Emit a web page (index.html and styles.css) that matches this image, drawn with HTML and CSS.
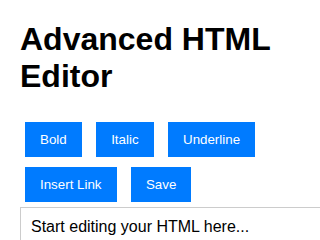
FILE: index.html
```html
<!DOCTYPE html>
<html>
<head>
<meta charset="utf-8">
<link rel="stylesheet" href="styles.css">
</head>
<body>
<h1 class="title">Advanced HTML Editor</h1>
<div class="toolbar">
  <button class="btn">Bold</button>
  <button class="btn">Italic</button>
  <button class="btn">Underline</button>
  <button class="btn">Insert Link</button>
  <button class="btn">Save</button>
</div>
<div class="editor" contenteditable="true">Start editing your HTML here...</div>
</body>
</html>
```
FILE: styles.css
```css
html, body {
  overflow-x: hidden;
}
body {
  margin: 0;
  padding: 0 20px 20px;
  font-family: "Liberation Sans", Arial, sans-serif;
  font-size: 16px;
  color: #000;
  background: #fff;
}
.title {
  font-size: 32px;
  font-weight: bold;
  margin: 21.44px 0;
}
.toolbar {
  width: 300px;
}
.btn {
  display: inline-block;
  margin: 5px;
  padding: 10px 15px;
  border: none;
  border-radius: 0;
  background: #007bff;
  color: #fff;
  font-family: "Liberation Sans", Arial, sans-serif;
  font-size: 13.333px;
}
.editor {
  width: 100%;
  border: 1px solid #ccc;
  padding: 10px;
  min-height: 200px;
}
```
